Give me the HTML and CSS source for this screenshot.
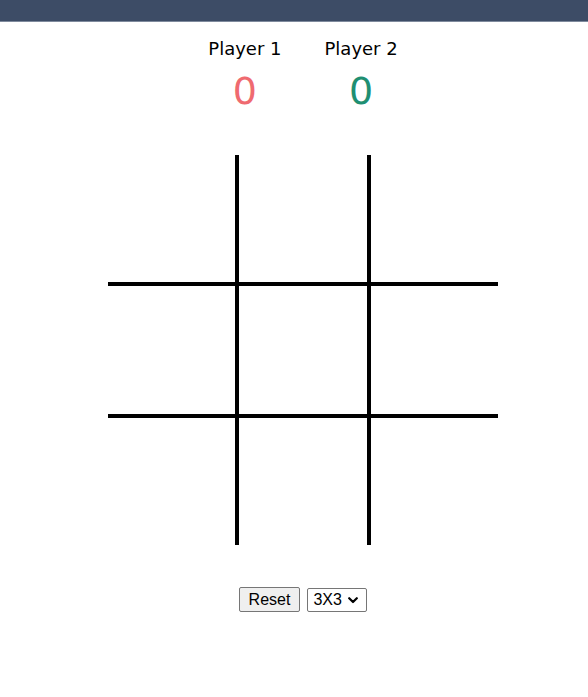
FILE: index.html
```html
<!DOCTYPE html>
<html lang="en">
<head>
<meta charset="utf-8">
<title>Tic Tac Toe</title>
<link rel="stylesheet" href="styles.css">
</head>
<body>
<header class="topbar"></header>
<main class="game">
  <section class="scoreboard">
    <div class="player">
      <div class="player-name">Player 1</div>
      <div class="score score-p1">0</div>
    </div>
    <div class="player">
      <div class="player-name">Player 2</div>
      <div class="score score-p2">0</div>
    </div>
  </section>
  <section class="board">
    <div class="cell"></div><div class="cell"></div><div class="cell"></div>
    <div class="cell"></div><div class="cell"></div><div class="cell"></div>
    <div class="cell"></div><div class="cell"></div><div class="cell"></div>
  </section>
  <section class="controls">
    <button class="reset-btn" type="button">Reset</button>
    <span class="select-wrap">
      <select class="size-select">
        <option>3X3</option>
        <option>4X4</option>
        <option>5X5</option>
      </select>
      <svg class="select-chevron" width="10" height="7" viewBox="0 0 10 7" aria-hidden="true">
        <path d="M1.2 1.2 L5 5 L8.8 1.2" fill="none" stroke="#000" stroke-width="2.2" stroke-linecap="round" stroke-linejoin="round"/>
      </svg>
    </span>
  </section>
</main>
</body>
</html>
```
FILE: styles.css
```css
html, body {
  margin: 0;
  padding: 0;
  background: #ffffff;
}

body {
  font-family: "Comic Sans MS", "DejaVu Sans", sans-serif;
  color: #000000;
}

.topbar {
  height: 21px;
  background: #3d4c66;
  border-bottom: 1px solid #7f8a9d;
}

.game {
  padding-left: 18px;
  display: flex;
  flex-direction: column;
  align-items: center;
}

.scoreboard {
  display: flex;
  gap: 43px;
  margin-top: 16px;
}

.player {
  display: flex;
  flex-direction: column;
  align-items: center;
}

.player-name {
  font-size: 18px;
  line-height: 21px;
}

.score {
  margin-top: 10px;
  font-size: 38px;
  line-height: 44px;
}

.score-p1 {
  color: #ef6a70;
}

.score-p2 {
  color: #1f8f72;
}

.board {
  margin-top: 42px;
  display: grid;
  grid-template-columns: 127px 128px 127px;
  grid-template-rows: 127px 128px 127px;
  gap: 4px;
  background: #000000;
}

.cell {
  background: #ffffff;
}

.controls {
  margin-top: 42px;
  display: flex;
  align-items: center;
  gap: 7px;
}

.reset-btn {
  font-family: "Liberation Sans", Arial, sans-serif;
  font-size: 16px;
  line-height: 17px;
  padding: 3px 9px;
  margin: 0;
  color: #000000;
  background: #efefef;
  border: 1px solid #767676;
  border-radius: 2px;
}

.select-wrap {
  position: relative;
  display: inline-flex;
}

.size-select {
  appearance: none;
  -webkit-appearance: none;
  box-sizing: border-box;
  width: 60px;
  height: 24px;
  margin: 0;
  padding: 0 0 0 5px;
  font-family: "Liberation Sans", Arial, sans-serif;
  font-size: 16px;
  line-height: 20px;
  color: #000000;
  background: #ffffff;
  border: 1px solid #767676;
  border-radius: 2px;
}

.select-chevron {
  position: absolute;
  left: 41px;
  top: 9px;
  pointer-events: none;
}
```
